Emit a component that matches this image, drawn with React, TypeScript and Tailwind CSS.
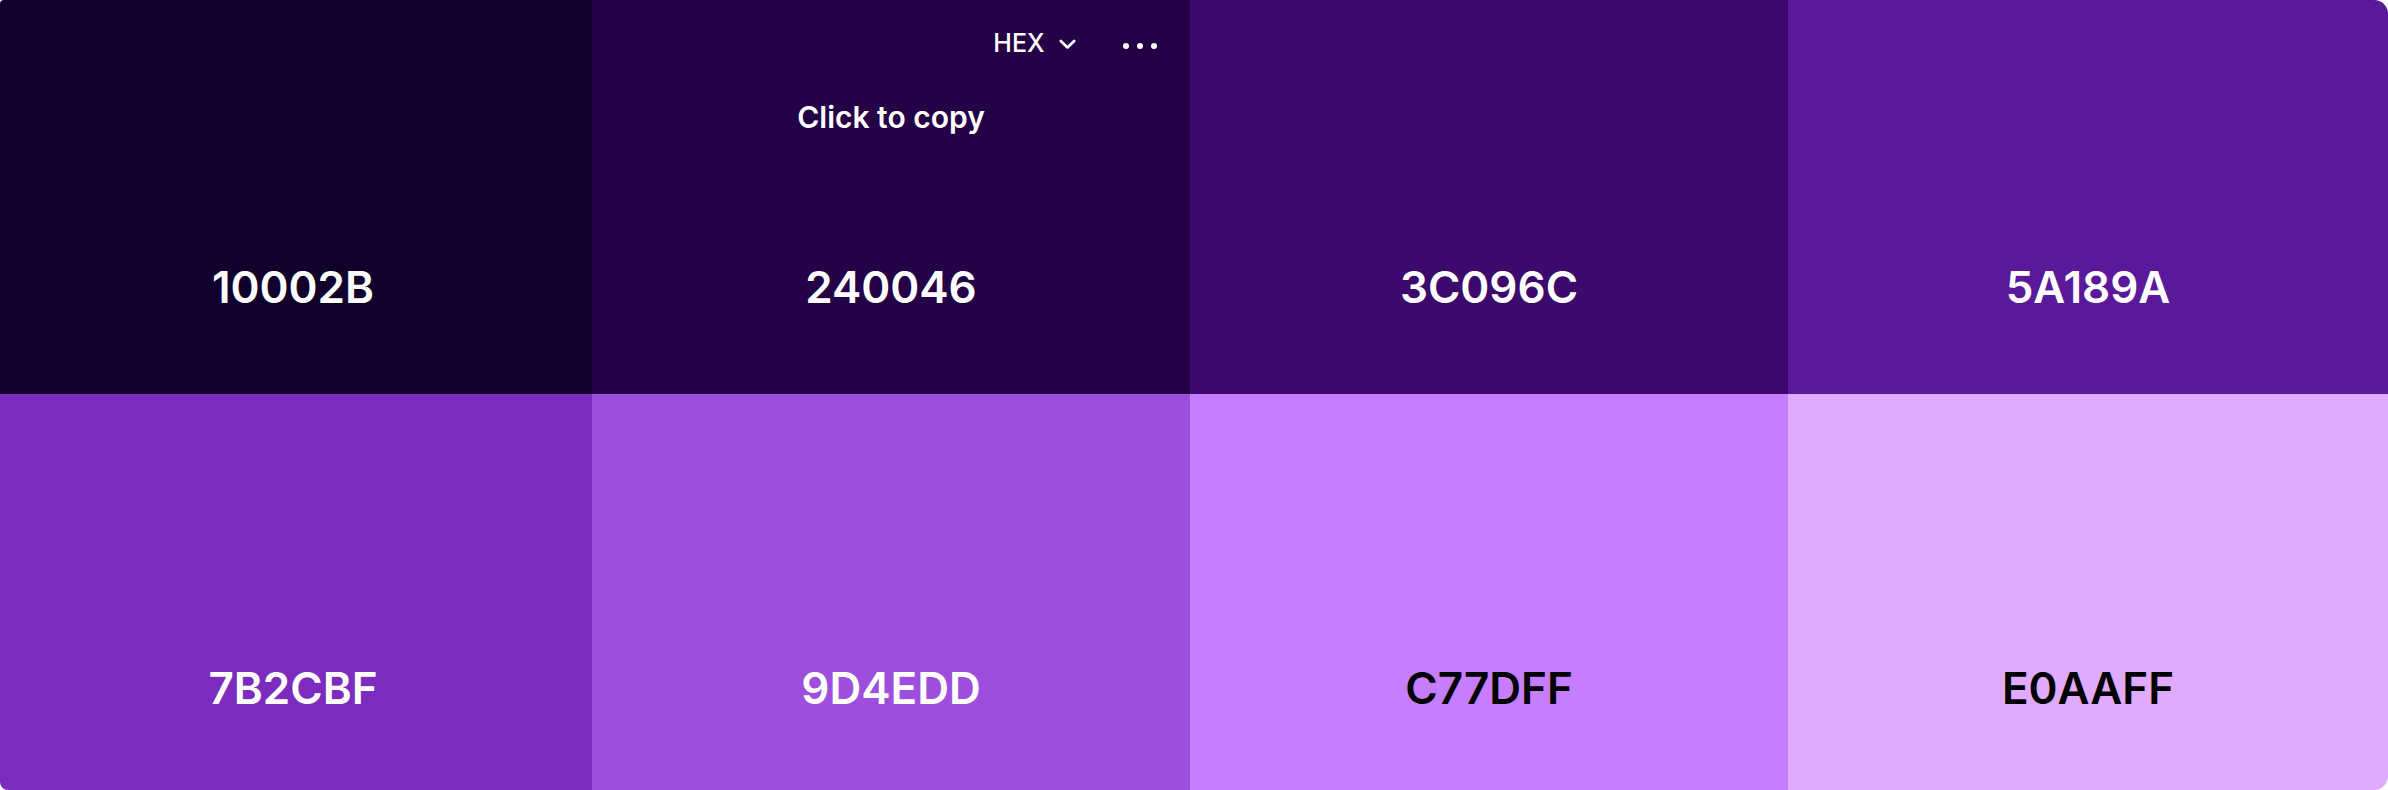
const colors = [
  { hex: "10002B", bg: "bg-[#10002b]", text: "text-white" },
  { hex: "240046", bg: "bg-[#240046]", text: "text-white" },
  { hex: "3C096C", bg: "bg-[#3c096c]", text: "text-white" },
  { hex: "5A189A", bg: "bg-[#5a189a]", text: "text-white" },
  { hex: "7B2CBF", bg: "bg-[#7b2cbf]", text: "text-white" },
  { hex: "9D4EDD", bg: "bg-[#9d4edd]", text: "text-white" },
  { hex: "C77DFF", bg: "bg-[#c77dff]", text: "text-black" },
  { hex: "E0AAFF", bg: "bg-[#e0aaff]", text: "text-black" },
];

const Toolbar = () => (
  <div className="flex items-center justify-end pt-[31px] pr-[33px] text-white">
    <span className="text-[25px] font-medium leading-none">HEX</span>
    <svg width="17" height="11" viewBox="0 0 17 11" className="ml-[14px] mt-[2px]" fill="none">
      <polyline points="1.8,2 8.5,8.5 15.2,2" stroke="white" strokeWidth="2.6" strokeLinecap="round" strokeLinejoin="round" />
    </svg>
    <div className="ml-[47px] flex items-center gap-[7.5px] mt-[5px]">
      <span className="w-[6.5px] h-[6.5px] rounded-full bg-white" />
      <span className="w-[6.5px] h-[6.5px] rounded-full bg-white" />
      <span className="w-[6.5px] h-[6.5px] rounded-full bg-white" />
    </div>
  </div>
);

export default function App() {
  return (
    <div className="w-[2388px] h-[790px] overflow-hidden rounded-tl-[4px] rounded-bl-[8px] rounded-r-[14px] font-['Inter','Noto_Sans',sans-serif]">
      <div className="-ml-[6px] w-[2394px] h-full grid grid-cols-[598px_598px_598px_1fr] grid-rows-[394px_1fr]">
        {colors.map((c, i) => {
          const top = i < 4;
          return (
            <div key={c.hex} className={`${c.bg} ${c.text} flex flex-col cursor-pointer`}>
              {i === 1 && (
                <>
                  <Toolbar />
                  <div className="mt-[46px] text-center text-[30px] font-semibold leading-none text-white">Click to copy</div>
                </>
              )}
              <div className="flex-1" />
              <div className={`text-center text-[44px] font-semibold leading-none ${top ? "pb-[85px]" : "pb-[80px]"}`}>
                {c.hex}
              </div>
            </div>
          );
        })}
      </div>
    </div>
  );
}
